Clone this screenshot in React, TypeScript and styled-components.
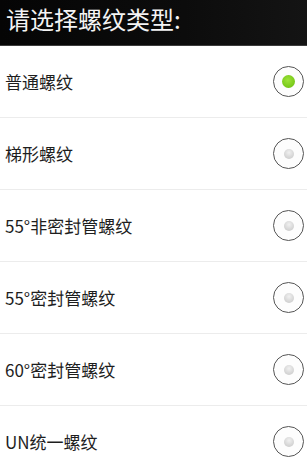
import styled, { createGlobalStyle } from 'styled-components';
import { useState } from 'react';

const GlobalStyle = createGlobalStyle`
  html, body {
    margin: 0;
    padding: 0;
    background: #ffffff;
  }
  body {
    font-family: "Noto Sans CJK SC", "Noto Sans", "Liberation Sans", sans-serif;
    overflow: hidden;
  }
`;

const Screen = styled.div`
  width: 307px;
  height: 467px;
  display: flex;
  flex-direction: column;
  background: #ffffff;
`;

const TitleBar = styled.div`
  height: 46px;
  flex-shrink: 0;
  display: flex;
  align-items: center;
  padding: 0 0 8px 6px;
  box-sizing: border-box;
  background: linear-gradient(90deg, #050505 0%, #0c0c0c 60%, #141414 100%);
  border-bottom: 1px solid #3c3c3c;
  color: #f4f4f4;
  font-size: 24px;
  line-height: 1;
`;

const List = styled.div`
  display: flex;
  flex-direction: column;
`;

const Row = styled.label`
  height: 71px;
  flex-shrink: 0;
  display: flex;
  align-items: center;
  justify-content: space-between;
  padding: 0 3px 0 5px;
  border-bottom: 1px solid #ececec;
  cursor: pointer;
`;

const Label = styled.span`
  font-size: 17px;
  color: #1e1e1e;
`;

const Radio = styled.span<{ checked: boolean }>`
  width: 29px;
  height: 29px;
  border: 1.8px solid #555555;
  border-radius: 50%;
  display: flex;
  align-items: center;
  justify-content: center;
  background: #fdfdfd;

  &::after {
    content: '';
    width: ${p => (p.checked ? 13 : 10)}px;
    height: ${p => (p.checked ? 13 : 10)}px;
    border-radius: 50%;
    background: ${p =>
      p.checked
        ? 'radial-gradient(circle at 45% 40%, #9de33a 0%, #7ccc1c 60%, #62b010 100%)'
        : 'radial-gradient(circle at 50% 35%, #f0f0f0 0%, #d2d2d2 70%, #c4c4c4 100%)'};
  }
`;

const options = ['普通螺纹', '梯形螺纹', '55°非密封管螺纹', '55°密封管螺纹', '60°密封管螺纹', 'UN统一螺纹'];

export default function App() {
  const [selected, setSelected] = useState(0);

  return <>
    <GlobalStyle />
    <Screen>
      <TitleBar>请选择螺纹类型:</TitleBar>
      <List>
        {options.map((opt, i) => (
          <Row key={i} onClick={() => setSelected(i)}>
            <Label>{opt}</Label>
            <Radio checked={i == selected} />
          </Row>
        ))}
      </List>
    </Screen>
  </>
}
